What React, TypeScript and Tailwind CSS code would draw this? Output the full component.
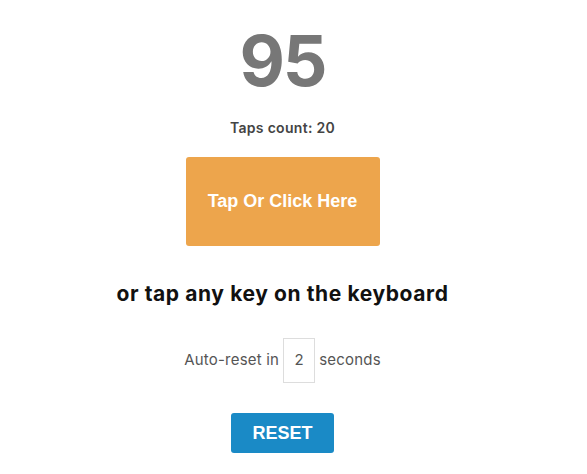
import React from "react";

export default function App() {
  return (
    <div className="w-[587px] h-[474px] bg-white flex flex-col items-center pr-[22px]" style={{ fontFamily: "Inter, 'Noto Sans', sans-serif" }}>
      <div className="mt-[21px] h-[80px] leading-[80px] text-[70px] font-bold text-[#777] tracking-[-2px]">95</div>
      <div className="mt-[17px] h-[20px] leading-[20px] text-[14px] font-semibold text-[#444] tracking-[0.3px]">Taps count: 20</div>
      <button
        className="mt-[19px] w-[194px] h-[89px] rounded-[3px] bg-[#eda54c] text-white text-[18px] font-bold"
        style={{ fontFamily: "'Liberation Sans', Arial, sans-serif" }}
      >
        Tap Or Click Here
      </button>
      <div className="mt-[34px] h-[28px] leading-[28px] text-[21px] font-bold text-[#111] tracking-[0.6px]">or tap any key on the keyboard</div>
      <div className="mt-[30px] flex items-center gap-[4px] text-[15px] text-[#555] tracking-[0.2px]">
        <span>Auto-reset in</span>
        <div className="w-[32px] h-[45px] border border-[#ddd] flex items-center justify-center text-[#555]">2</div>
        <span>seconds</span>
      </div>
      <button
        className="mt-[30px] w-[103px] h-[40px] rounded-[3px] bg-[#1a8ac6] text-white text-[18px] font-bold"
        style={{ fontFamily: "'Liberation Sans', Arial, sans-serif" }}
      >
        RESET
      </button>
    </div>
  );
}
